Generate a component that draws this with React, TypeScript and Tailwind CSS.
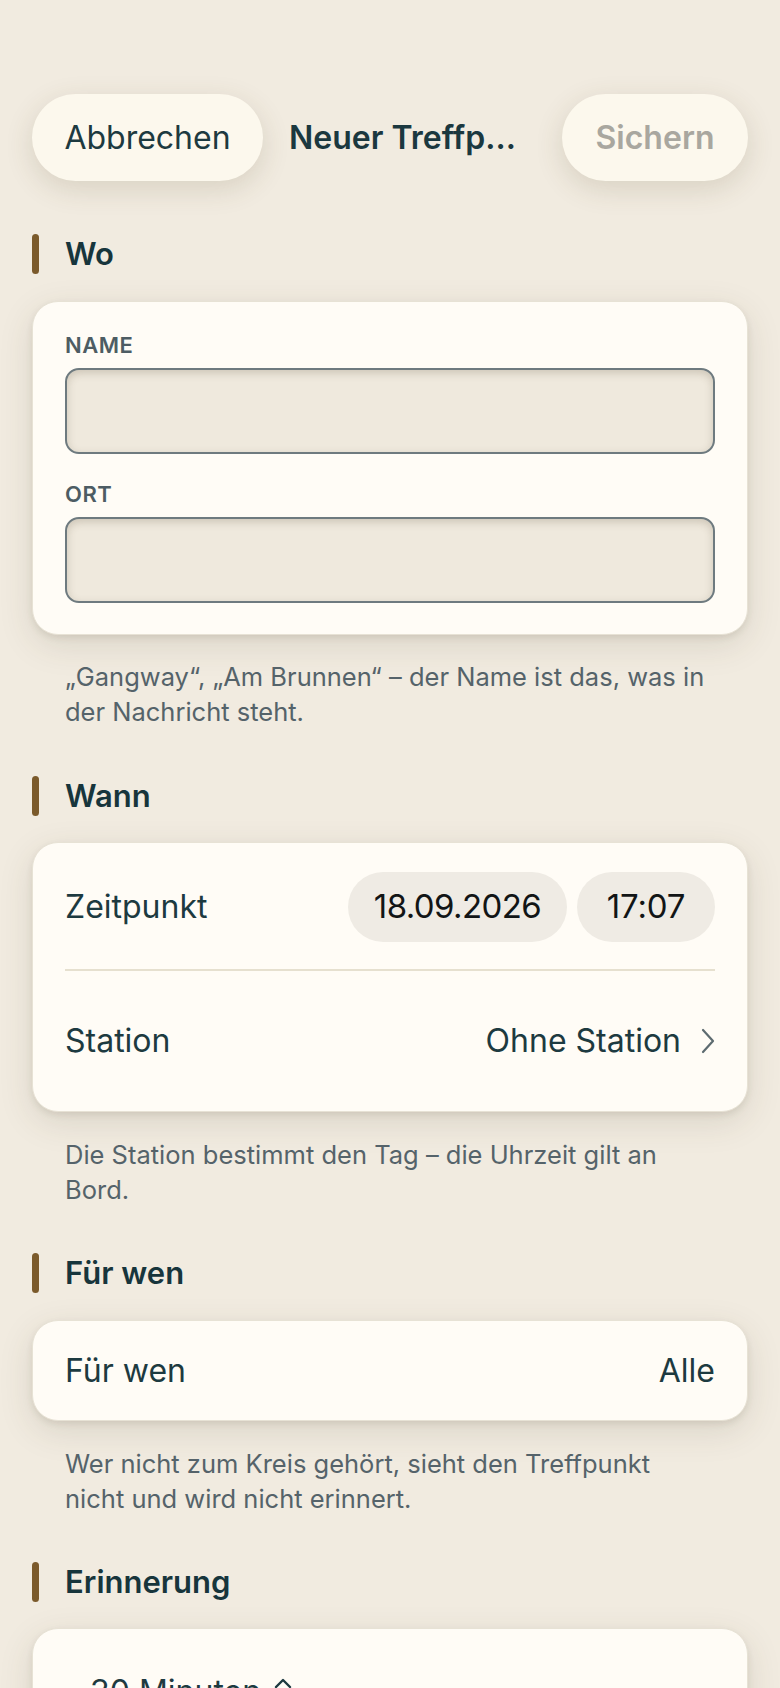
import React from "react";

function SectionHeader({ title, className }: { title: string; className: string }) {
  return (
    <div className={`flex h-[40px] items-center px-8 ${className}`}>
      <div className="h-[40px] w-[7px] rounded-full bg-[#7b5a2b]" />
      <div className="ml-[26px] text-[31px] font-semibold leading-[40px] text-[#17353c]">{title}</div>
    </div>
  );
}

function Help({ children, className }: { children: React.ReactNode; className: string }) {
  return (
    <p className={`px-[65px] text-[25.5px] leading-[35px] text-[#55636a] ${className}`}>{children}</p>
  );
}

const card =
  "mx-8 rounded-[26px] border border-[#e7e2d5] bg-[#fffcf6] shadow-[0_3px_6px_rgba(70,60,35,0.10),0_10px_34px_rgba(70,60,35,0.13)]";

const input =
  "h-[86px] w-full rounded-[14px] border-2 border-[#6e7a7f] bg-[#efe9dd] shadow-[inset_0_3px_9px_rgba(80,70,45,0.22)] outline-none";

export default function App() {
  return (
    <div className="h-[1688px] overflow-hidden bg-[#f1ebe0] font-['Inter',sans-serif]">
      {/* Top bar */}
      <div className="flex items-center px-8 pt-[94px]">
        <button className="h-[87px] w-[231px] rounded-full bg-[#fcf8ed] text-[32px] text-[#1d3a40] shadow-[0_8px_28px_rgba(90,75,40,0.16)]">
          Abbrechen
        </button>
        <div className="ml-[26px] flex-1 whitespace-nowrap text-[32px] font-semibold text-[#1b383f]">
          Neuer Treffp...
        </div>
        <button className="h-[87px] w-[186px] rounded-full bg-[#fcf8ed] text-[32px] font-semibold text-[#a9a79f] shadow-[0_8px_28px_rgba(90,75,40,0.16)]">
          Sichern
        </button>
      </div>

      {/* Wo */}
      <SectionHeader title="Wo" className="mt-[53px]" />
      <div className={`${card} mt-[27px] px-8 pb-[31px] pt-[30px]`}>
        <div className="text-[22px] font-semibold leading-[26px] tracking-[0.5px] text-[#4d5c63]">NAME</div>
        <input className={`${input} mt-[10px]`} />
        <div className="mt-[27px] text-[22px] font-semibold leading-[26px] tracking-[0.5px] text-[#4d5c63]">ORT</div>
        <input className={`${input} mt-[10px]`} />
      </div>
      <Help className="mt-[24px]">
        „Gangway“, „Am Brunnen“ – der Name ist das, was in
        <br />
        der Nachricht steht.
      </Help>

      {/* Wann */}
      <SectionHeader title="Wann" className="mt-[47px]" />
      <div className={`${card} mt-[26px] px-8`}>
        <div className="flex items-center justify-between pb-[27px] pt-[29px]">
          <span className="text-[32px] text-[#1d3a40]">Zeitpunkt</span>
          <div className="flex gap-[10px]">
            <div className="flex h-[70px] w-[219px] items-center justify-center rounded-full bg-[#efebe4] text-[33px] tracking-[-0.6px] text-[#121516]">
              18.09.2026
            </div>
            <div className="flex h-[70px] w-[138px] items-center justify-center rounded-full bg-[#efebe4] text-[33px] tracking-[-0.2px] text-[#121516]">
              17:07
            </div>
          </div>
        </div>
        <div className="h-[2px] bg-[#e6e0cf]" />
        <div className="flex h-[140px] items-center justify-between">
          <span className="text-[32px] text-[#1d3a40]">Station</span>
          <div className="flex items-center gap-[20px]">
            <span className="text-[32px] text-[#1d3a40]">Ohne Station</span>
            <svg width="14" height="26" viewBox="0 0 14 26" fill="none">
              <path d="M2 2 L12 13 L2 24" stroke="#5d6b70" strokeWidth="2.2" strokeLinecap="round" strokeLinejoin="round" />
            </svg>
          </div>
        </div>
      </div>
      <Help className="mt-[25px]">
        Die Station bestimmt den Tag – die Uhrzeit gilt an
        <br />
        Bord.
      </Help>

      {/* Für wen */}
      <SectionHeader title="Für wen" className="mt-[46px]" />
      <div className={`${card} mt-[27px] flex h-[101px] items-center justify-between px-8`}>
        <span className="text-[32px] text-[#1d3a40]">Für wen</span>
        <span className="text-[32px] text-[#1d3a40]">Alle</span>
      </div>
      <Help className="mt-[25px]">
        Wer nicht zum Kreis gehört, sieht den Treffpunkt
        <br />
        nicht und wird nicht erinnert.
      </Help>

      {/* Erinnerung */}
      <SectionHeader title="Erinnerung" className="mt-[46px]" />
      <div className={`${card} mt-[26px] h-[200px] px-[57px] pt-[43px]`}>
        <div className="flex items-center gap-[12px] text-[32px] leading-[40px] text-[#1d3a40]">
          <span>30 Minuten</span>
          <svg width="20" height="30" viewBox="0 0 20 30" fill="none">
            <path d="M3 10 L10 3 L17 10" stroke="#1d3a40" strokeWidth="2.4" strokeLinecap="round" strokeLinejoin="round" />
            <path d="M3 20 L10 27 L17 20" stroke="#1d3a40" strokeWidth="2.4" strokeLinecap="round" strokeLinejoin="round" />
          </svg>
        </div>
      </div>
    </div>
  );
}
